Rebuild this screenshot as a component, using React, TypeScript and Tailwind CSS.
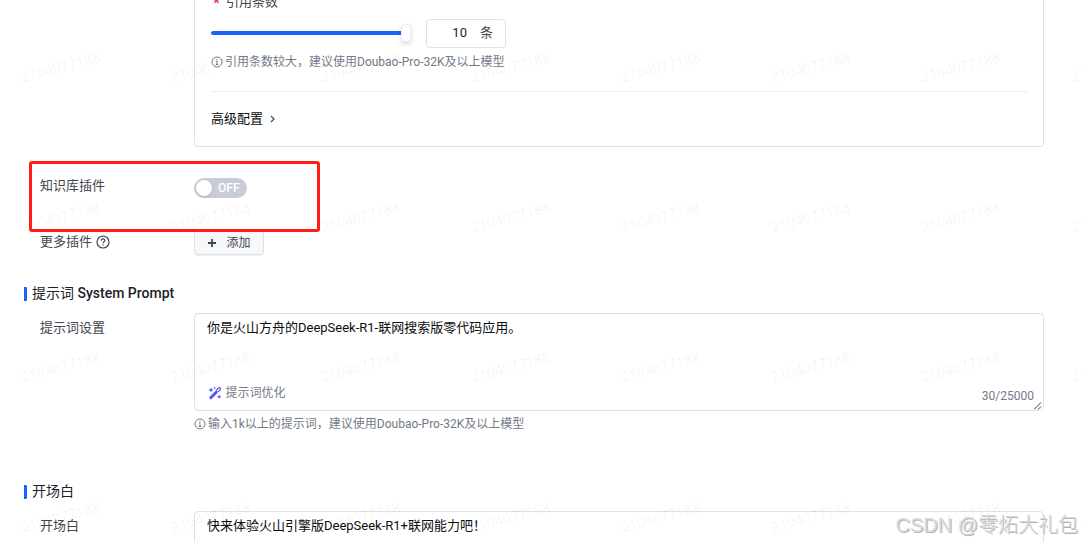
import React from 'react';

const TILES = Array.from({ length: 32 }, (_, i) => i);

const Hint = ({ children }: { children: React.ReactNode }) => (
  <div className="flex h-5 items-center text-[12px] leading-5 text-[#737a87] whitespace-nowrap">
    <svg viewBox="0 0 12 12" className="mr-[2px] h-3 w-3 shrink-0" fill="none" stroke="currentColor">
      <circle cx="6" cy="6" r="5" />
      <path d="M6 3v1.1M5 5.2h1v3.1M4.6 8.5h2.8" />
    </svg>
    <span>{children}</span>
  </div>
);

const SectionTitle = ({ children }: { children: React.ReactNode }) => (
  <div className="flex h-[22px] items-center gap-[5px] pl-6 text-[14px] leading-[22px] text-[#1d2129]">
    <span className="mt-px h-[14px] w-[3px] rounded-r-[1px] bg-[#1664ff]" />
    <h3>{children}</h3>
  </div>
);

const FormRow = ({ label, className, labelClassName = '', children }: {
  label: React.ReactNode;
  className: string;
  labelClassName?: string;
  children: React.ReactNode;
}) => (
  <div className={`flex items-start pl-10 ${className}`}>
    <div className={`flex h-6 w-[154px] shrink-0 items-center gap-1 text-[#42464e] ${labelClassName}`}>{label}</div>
    <div className="w-[850px]">{children}</div>
  </div>
);

const MagicWand = () => (
  <svg viewBox="0 0 14 14" className="h-[14px] w-[14px]" fill="none">
    <defs>
      <linearGradient id="wand" x1="0" y1="0" x2="14" y2="10" gradientUnits="userSpaceOnUse">
        <stop stopColor="#1664ff" />
        <stop offset="1" stopColor="#8045ff" />
      </linearGradient>
    </defs>
    <path d="m2.8 11.7 5.4-5.4" stroke="url(#wand)" strokeWidth="2.9" strokeLinecap="round" />
    <path d="m8 4.6 2.6-2.600a1 1 0 0 1 1.600 1.600L9.600 6.200" stroke="url(#wand)" strokeWidth="1.200" />
    <path
      d="m3 1.500.8 1.700 1.700.8-1.700.8L3 6.500l-.8-1.700L.5 4l1.700-.8zM6.700.7l.4.9.9.4-.9.4-.4.9-.4-.9-.9-.4.9-.4zM11.200 8.500l.7 1.500 1.500.7-1.500.7-.7 1.500-.7-1.500-1.500-.7 1.500-.7z"
      fill="url(#wand)"
    />
  </svg>
);

const Watermark = () => (
  <div className="pointer-events-none absolute -left-[14px] -top-2 grid w-[1200px] grid-cols-8">
    {TILES.map((i) => (
      <div
        key={i}
        className="flex h-[150px] items-center justify-center font-['Noto_Sans',sans-serif] text-[14px] tracking-[0.1px] text-black/6"
      >
        <span className="-rotate-15">2104077188</span>
      </div>
    ))}
  </div>
);

export default function App() {
  return (
    <div className="relative h-[542px] w-full overflow-hidden bg-white font-[Roboto,'Noto_Sans_CJK_SC',sans-serif] text-[13px] leading-5">
      {/* Retrieval settings */}
      <div className="ml-[194px] flex h-[147px] w-[850px] flex-col rounded-b-[4px] border border-t-0 border-[#dde2e9] px-4">
        <div className="-mt-2 flex h-5 items-center text-[#42464e]">
          <span className="w-[15px] pl-[2px] pt-[2px] text-[15px] font-bold leading-5 text-[#db373f]">*</span>引用条数
        </div>
        <div className="mt-[7px] flex h-[29px] items-center">
          <div className="flex w-[200px] items-center">
            <div className="-mt-px h-1 flex-1 rounded-l-full bg-[#1664ff]" />
            <div className="-mt-px h-[18px] w-[10px] rounded-[3px] border border-[#eaedf1] bg-white shadow-[0_2px_4px_rgba(0,0,0,0.15)]" />
          </div>
          <div className="ml-[15px] flex h-[29px] w-20 items-center justify-end gap-[13px] rounded-[4px] border border-[#dde2e9] pb-px pr-3 text-[#1d2129]">
            <span>10</span>
            <span className="text-[#42464e]">条</span>
          </div>
        </div>
        <div className="mt-1">
          <Hint>引用条数较大，建议使用Doubao-Pro-32K及以上模型</Hint>
        </div>
        <div className="mt-[19px] border-t border-[#eaedf1]" />
        <div className="mt-[17px] flex h-5 items-center text-[#0c0d0e]">
          高级配置
          <svg viewBox="0 0 6 8" className="ml-[7px] h-2 w-[6px]" fill="none" stroke="#42464e" strokeWidth="1.2">
            <path d="m1 1 3 3-3 3" />
          </svg>
        </div>
      </div>

      {/* Plugins */}
      <FormRow label="知识库插件" className="mt-[27px] h-[56px]">
        <div className="mt-1 flex h-5 w-[53px] items-center rounded-full bg-[#c7ccd6] pl-[2px] text-[12px] font-medium text-white">
          <span className="mr-[6px] h-4 w-4 rounded-full bg-white shadow-sm" />
          OFF
        </div>
      </FormRow>
      <FormRow
        className="h-[52px]"
        label={
          <>
            更多插件
            <svg viewBox="0 0 14 14" className="h-[14px] w-[14px]" fill="none" stroke="currentColor" strokeWidth="1.2">
              <circle cx="7" cy="7" r="6" />
              <path d="M5.2 5.7c0-2.4 3.6-2.2 3.6-.2C8.8 6.7 7 6.7 7 8.3M7 9.3v1.2" />
            </svg>
          </>
        }
      >
        <button className="flex h-[25px] w-[70px] items-center justify-center gap-[9px] rounded-[4px] border border-[#dde2e9] bg-[#f6f8fa] text-[12px] text-[#42464e] shadow-[0_1px_1px_rgba(0,0,0,0.06)]">
          <svg viewBox="0 0 10 10" className="h-[10px] w-[10px]" stroke="currentColor" strokeWidth="1.8">
            <path d="M5 1v8M1 5h8" />
          </svg>
          添加
        </button>
      </FormRow>

      {/* System prompt */}
      <SectionTitle>
        提示词 <span className="font-medium">System Prompt</span>
      </SectionTitle>
      <FormRow label="提示词设置" labelClassName="mt-[3px]" className="mt-[9px] h-[167px]">
        <div className="relative flex h-[98px] flex-col justify-between rounded-[4px] border border-[#dde2e9] py-1 pl-3 pr-[9px] text-[#0c0d0e]">
          <p>你是火山方舟的DeepSeek-R1-联网搜索版零代码应用。</p>
          <div className="flex items-end justify-between text-[12px] text-[#737a87]">
            <div className="mb-[3px] flex items-center gap-1 pl-[0.5px]">
              <MagicWand />
              <span>提示词优化</span>
            </div>
            <span>30/25000</span>
          </div>
          <svg viewBox="0 0 8 8" className="absolute bottom-0 right-px h-2 w-2" stroke="#1d2129" strokeWidth="0.9">
            <path d="m0 7.5 7-7M4 7.5l3-3" />
          </svg>
        </div>
        <div className="mt-[3px]">
          <Hint>输入1k以上的提示词，建议使用Doubao-Pro-32K及以上模型</Hint>
        </div>
      </FormRow>

      {/* Opening remarks */}
      <SectionTitle>开场白</SectionTitle>
      <FormRow label="开场白" labelClassName="mt-[3px]" className="mt-[9px]">
        <div className="h-[98px] rounded-[4px] border border-[#dde2e9] px-3 py-1 text-[#0c0d0e]">
          快来体验火山引擎版DeepSeek-R1+联网能力吧！
        </div>
      </FormRow>

      <Watermark />

      {/* Highlight frame */}
      <div className="absolute left-[29px] top-[161px] h-[71px] w-[291px] rounded-[3px] border-3 border-[#ff1d15]" />

      <div className="absolute right-1 bottom-[3px] font-['Liberation_Sans','Noto_Sans_CJK_SC',sans-serif] text-[20px] font-light leading-7 whitespace-nowrap text-[#dadada] [text-shadow:1px_1px_0_#b4b4b4]">
        CSDN @零炻大礼包
      </div>
    </div>
  );
}
